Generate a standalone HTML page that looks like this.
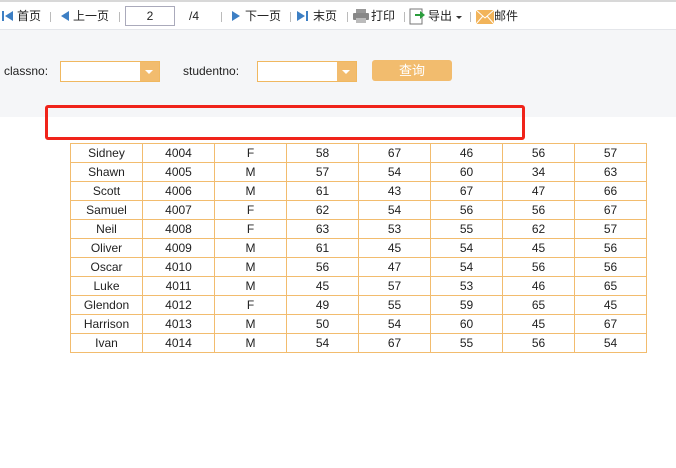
<!DOCTYPE html>
<html><head><meta charset="utf-8"><style>
*{margin:0;padding:0;box-sizing:border-box}
body{width:676px;height:468px;background:#fff;font-family:"Liberation Sans","Noto Sans CJK SC",sans-serif;font-size:12px;color:#222;position:relative;overflow:hidden}
.tb{position:absolute;left:0;top:0;width:676px;height:30px;border-top:2px solid #d8d8d8;border-bottom:1px solid #e4e6ea;background:#fff}
.it{position:absolute;top:6px;font-size:12px;line-height:16px;white-space:nowrap}
.sep{position:absolute;top:10px;width:1px;height:10px;background:#bbb}
.gray{position:absolute;left:0;top:30px;width:676px;height:87px;background:#f5f6f8}
.lbl{position:absolute;top:64px;font-size:12px}
.sel{position:absolute;top:61px;height:21px;border:1px solid #f0b860;background:#fff}
.sel i{position:absolute;right:0;top:0;width:19px;height:19px;background:#f2bc6e}
.sel i:after{content:"";position:absolute;left:5px;top:8px;border-left:4px solid transparent;border-right:4px solid transparent;border-top:4px solid #fff}
.btn{position:absolute;left:372px;top:60px;width:80px;height:21px;background:#f2bc6e;border-radius:3px;color:#fff;text-align:center;line-height:21px;font-size:13px}
.red{position:absolute;left:45px;top:105px;width:480px;height:35px;border:3px solid #f0231a;border-radius:3px}
table{position:absolute;left:70px;top:143px;border-collapse:collapse}
td{width:72px;height:19px;border:1px solid #f2bc6e;text-align:center;font-size:12px;padding:0;line-height:17px}
</style></head><body>
<div class="tb">
<svg style="position:absolute;left:2px;top:8px" width="12" height="12"><rect x="0" y="1" width="2" height="10" fill="#3d7fc4"/><path d="M11 1V11L3 6Z" fill="#3d7fc4"/></svg>
<span class="it" style="left:17px">首页</span><span class="sep" style="left:50px"></span>
<svg style="position:absolute;left:60px;top:8px" width="10" height="12"><path d="M9 1V11L1 6Z" fill="#3d7fc4"/></svg>
<span class="it" style="left:73px">上一页</span><span class="sep" style="left:119px"></span>
<div style="position:absolute;left:125px;top:4px;width:50px;height:20px;border:1px solid #aab;text-align:center;line-height:18px">2</div>
<span class="it" style="left:189px">/4</span><span class="sep" style="left:221px"></span>
<svg style="position:absolute;left:231px;top:8px" width="10" height="12"><path d="M1 1V11L9 6Z" fill="#3d7fc4"/></svg>
<span class="it" style="left:245px">下一页</span><span class="sep" style="left:290px"></span>
<svg style="position:absolute;left:297px;top:8px" width="12" height="12"><path d="M0 1V11L8 6Z" fill="#3d7fc4"/><rect x="9" y="1" width="2" height="10" fill="#3d7fc4"/></svg>
<span class="it" style="left:313px">末页</span><span class="sep" style="left:347px"></span>
<svg style="position:absolute;left:353px;top:7px" width="16" height="15"><rect x="3" y="0" width="10" height="4" fill="#999"/><rect x="0" y="4" width="16" height="7" rx="1" fill="#888"/><rect x="3" y="9" width="10" height="5" fill="#bbb"/></svg>
<span class="it" style="left:371px">打印</span><span class="sep" style="left:404px"></span>
<svg style="position:absolute;left:409px;top:5px" width="16" height="18"><rect x="1" y="2" width="12" height="15" fill="#fff" stroke="#777"/><path d="M6 7h5V4l5 4-5 4V9H6z" fill="#2a9d3c"/></svg>
<span class="it" style="left:428px">导出</span>
<svg style="position:absolute;left:456px;top:14px" width="6" height="4"><path d="M0 0h6L3 3z" fill="#333"/></svg>
<span class="sep" style="left:470px"></span>
<svg style="position:absolute;left:476px;top:8px" width="18" height="14"><rect width="18" height="14" fill="#f2b45a"/><path d="M0 0L9 8L18 0M0 14L7 6M18 14L11 6" stroke="#fff" fill="none"/></svg>
<span class="it" style="left:494px">邮件</span>
</div>
<div class="gray"></div>
<span class="lbl" style="left:4px">classno:</span>
<div class="sel" style="left:60px;width:100px"><i></i></div>
<span class="lbl" style="left:183px">studentno:</span>
<div class="sel" style="left:257px;width:100px"><i></i></div>
<div class="btn">查询</div>
<div class="red"></div>
<table>
<tr><td>Sidney</td><td>4004</td><td>F</td><td>58</td><td>67</td><td>46</td><td>56</td><td>57</td></tr>
<tr><td>Shawn</td><td>4005</td><td>M</td><td>57</td><td>54</td><td>60</td><td>34</td><td>63</td></tr>
<tr><td>Scott</td><td>4006</td><td>M</td><td>61</td><td>43</td><td>67</td><td>47</td><td>66</td></tr>
<tr><td>Samuel</td><td>4007</td><td>F</td><td>62</td><td>54</td><td>56</td><td>56</td><td>67</td></tr>
<tr><td>Neil</td><td>4008</td><td>F</td><td>63</td><td>53</td><td>55</td><td>62</td><td>57</td></tr>
<tr><td>Oliver</td><td>4009</td><td>M</td><td>61</td><td>45</td><td>54</td><td>45</td><td>56</td></tr>
<tr><td>Oscar</td><td>4010</td><td>M</td><td>56</td><td>47</td><td>54</td><td>56</td><td>56</td></tr>
<tr><td>Luke</td><td>4011</td><td>M</td><td>45</td><td>57</td><td>53</td><td>46</td><td>65</td></tr>
<tr><td>Glendon</td><td>4012</td><td>F</td><td>49</td><td>55</td><td>59</td><td>65</td><td>45</td></tr>
<tr><td>Harrison</td><td>4013</td><td>M</td><td>50</td><td>54</td><td>60</td><td>45</td><td>67</td></tr>
<tr><td>Ivan</td><td>4014</td><td>M</td><td>54</td><td>67</td><td>55</td><td>56</td><td>54</td></tr>
</table>
</body></html>
